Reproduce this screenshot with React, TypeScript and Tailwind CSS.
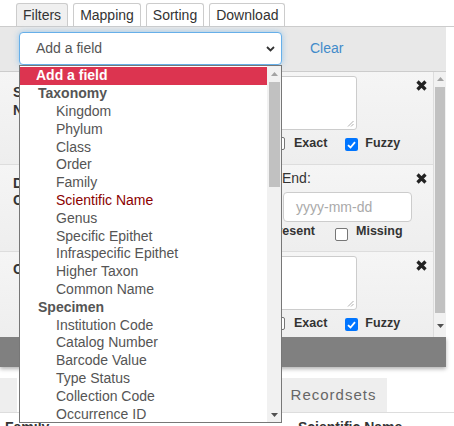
import React from 'react';

const Checkbox = ({ checked = false }: { checked?: boolean }) =>
  checked ? (
    <span className="flex h-[13px] w-[13px] shrink-0 items-center justify-center rounded-[2px] bg-[#0075ff]">
      <svg width="9" height="8" viewBox="0 0 9 8">
        <path d="M1 4.2 L3.5 6.5 L8 1.2" fill="none" stroke="white" strokeWidth="1.8" />
      </svg>
    </span>
  ) : (
    <span className="block h-[13px] w-[13px] shrink-0 rounded-[2px] border border-[#767676] bg-white" />
  );

const CloseIcon = () => (
  <svg width="11" height="11" viewBox="0 0 11 11" className="mt-[8px] shrink-0">
    <path d="M1.5 1.5 L9.5 9.5 M9.5 1.5 L1.5 9.5" stroke="#222" strokeWidth="3.2" strokeLinecap="butt" />
  </svg>
);

const MatchRow = () => (
  <div className="mt-[5px] flex h-[17px] items-start text-[12.5px] font-bold leading-[17px]">
    <span className="mt-[2px] ml-[82px]">
      <Checkbox />
    </span>
    <span className="ml-[9px]">Exact</span>
    <span className="mt-[3px] ml-[18px]">
      <Checkbox checked />
    </span>
    <span className="ml-[7px]">Fuzzy</span>
  </div>
);

const Textarea = () => (
  <div className="relative h-[54px] w-[167px] rounded-[3px] border border-[#ccc] bg-white">
    <svg width="7" height="7" viewBox="0 0 7 7" className="absolute right-[2px] bottom-[2px]">
      <path d="M6.5 1 L1 6.5 M6.5 4 L4 6.5" stroke="#999" strokeWidth="0.8" />
    </svg>
  </div>
);

const fields: { label: string; kind: 'first' | 'group' | 'opt' | 'sel' }[] = [
  { label: 'Add a field', kind: 'first' },
  { label: 'Taxonomy', kind: 'group' },
  { label: 'Kingdom', kind: 'opt' },
  { label: 'Phylum', kind: 'opt' },
  { label: 'Class', kind: 'opt' },
  { label: 'Order', kind: 'opt' },
  { label: 'Family', kind: 'opt' },
  { label: 'Scientific Name', kind: 'sel' },
  { label: 'Genus', kind: 'opt' },
  { label: 'Specific Epithet', kind: 'opt' },
  { label: 'Infraspecific Epithet', kind: 'opt' },
  { label: 'Higher Taxon', kind: 'opt' },
  { label: 'Common Name', kind: 'opt' },
  { label: 'Specimen', kind: 'group' },
  { label: 'Institution Code', kind: 'opt' },
  { label: 'Catalog Number', kind: 'opt' },
  { label: 'Barcode Value', kind: 'opt' },
  { label: 'Type Status', kind: 'opt' },
  { label: 'Collection Code', kind: 'opt' },
  { label: 'Occurrence ID', kind: 'opt' },
  { label: 'Catalog Number', kind: 'opt' },
];

const rowClass = {
  first: 'bg-[#dc3450] pl-[16px] font-bold text-white',
  group: 'pl-[18px] font-bold text-[#555]',
  opt: 'pl-[36px] text-[#555]',
  sel: 'pl-[36px] text-[#8b0000]',
};

const tabs = ['Filters', 'Mapping', 'Sorting', 'Download'];

export default function App() {
  return (
    <div className="relative h-[426px] w-[454px] overflow-hidden bg-white font-['Liberation_Sans',Arial,sans-serif] text-[14px] text-[#333]">
      <div className="w-[446px]">
        {/* Tabs */}
        <div className="flex h-[27px] w-[454px] gap-[5px] border-b border-[#ccc] pt-[3px] pl-[16px]">
          {tabs.map((t, i) => (
            <div
              key={t}
              className={`flex h-full items-center rounded-t-[3px] border border-b-0 border-[#ccc] px-[6px] leading-[17px] ${
                i === 0 ? 'bg-[#f0f0f0]' : 'bg-white'
              }`}
            >
              {t}
            </div>
          ))}
        </div>

        {/* Field picker */}
        <div className="flex h-[45px] items-start border-b border-[#ccc] bg-[#e8e8e8] pt-[5px] pl-[19px]">
          <div className="flex h-[33px] w-[263px] items-center justify-between rounded-[4px] border border-[#66afe9] bg-white pr-[6px] pl-[16px] text-[#555] shadow-[0_0_6px_rgba(102,175,233,0.6)]">
            <span>Add a field</span>
            <svg width="9" height="6" viewBox="0 0 9 6">
              <path d="M1 1 L4.5 4.5 L8 1" fill="none" stroke="#333" strokeWidth="1.8" />
            </svg>
          </div>
          <div className="flex h-[33px] items-center pl-[28px] text-[#428bca]">Clear</div>
        </div>

        {/* Filter list */}
        <div className="flex h-[265px]">
          <div className="flex w-[433px] flex-col">
            <div className="flex h-[93px] border-b border-[#ddd] bg-linear-to-b from-[#f5f5f5] to-[#eeeeee]">
              <div className="w-[190px] pt-[11px] pl-[13px] font-bold leading-[18px]">
                <div>Scientific</div>
                <div>Name</div>
              </div>
              <div className="w-[226px] pt-[4px]">
                <Textarea />
                <MatchRow />
              </div>
              <CloseIcon />
            </div>

            <div className="flex h-[87px] border-b border-[#ddd] bg-linear-to-b from-[#f5f5f5] to-[#eeeeee]">
              <div className="w-[190px] pt-[10px] pl-[13px] font-bold leading-[17px]">
                <div>Date</div>
                <div>Collected</div>
              </div>
              <div className="w-[226px] pt-[5px]">
                <div className="flex">
                  <div className="w-[92px]">
                    <div className="leading-[17px]">Start:</div>
                  </div>
                  <div>
                    <div className="leading-[17px]">End:</div>
                    <div className="mt-[5px] ml-px flex h-[30px] w-[129px] items-center rounded-[4px] border border-[#ccc] bg-white pl-[12px] text-[#aaa]">
                      yyyy-mm-dd
                    </div>
                  </div>
                </div>
                <div className="mt-[1px] flex h-[17px] items-start text-[12.5px] font-bold leading-[17px]">
                  <span className="mt-[3px] ml-[33px]">
                    <Checkbox />
                  </span>
                  <span className="ml-[9px] w-[70px] text-right">Present</span>
                  <span className="mt-[5px] ml-[20px]">
                    <Checkbox />
                  </span>
                  <span className="ml-[8px]">Missing</span>
                </div>
              </div>
              <CloseIcon />
            </div>

            <div className="flex flex-1 bg-linear-to-b from-[#f5f5f5] to-[#eeeeee]">
              <div className="w-[190px] pt-[9px] pl-[13px] font-bold leading-[17px]">Common Name</div>
              <div className="w-[226px] pt-[4px]">
                <Textarea />
                <MatchRow />
              </div>
              <CloseIcon />
            </div>
          </div>

          {/* Scrollbar */}
          <div className="flex w-[13px] flex-col items-center border-l border-[#ddd] bg-[#f1f1f1] pt-[4px]">
            <svg width="7" height="4" viewBox="0 0 7 4" className="mt-[1px]">
              <path d="M0 4 L3.5 0 L7 4 Z" fill="#a3a3a3" />
            </svg>
            <div className="mt-[6px] h-[226px] w-[10px] bg-[#c1c1c1]" />
            <svg width="7" height="4" viewBox="0 0 7 4" className="mt-[11px]">
              <path d="M0 0 L3.5 4 L7 0 Z" fill="#505050" />
            </svg>
          </div>
        </div>

        {/* Bottom bar */}
        <div className="h-[30px] bg-[#808080] shadow-[0_2px_4px_rgba(0,0,0,0.3)]" />
      </div>

      {/* Lower tabs */}
      <div className="mt-[11px] flex h-[35px] w-[454px] border-b border-[#ddd]">
        <div className="h-full w-[17px] bg-[#eeeeee]" />
        <div className="ml-[263px] flex h-full w-[107px] items-center justify-center bg-[#eeeeee] text-[15px] tracking-[1px] text-[#666]">
          Recordsets
        </div>
      </div>
      <div className="flex pt-[6px] font-bold leading-[17px]">
        <div className="w-[298px] pl-[5px]">Family</div>
        <div>Scientific Name</div>
      </div>

      {/* Open select dropdown */}
      <div className="absolute top-[65px] left-[19px] flex h-[358px] w-[263px] overflow-hidden border border-[#777] bg-white">
        <div className="w-[247px] pt-px">
          {fields.map((f, i) => (
            <div key={i} className={`flex h-[17.8px] items-center whitespace-nowrap ${rowClass[f.kind]}`}>
              {f.label}
            </div>
          ))}
        </div>
        <div className="flex w-[14px] flex-col items-center bg-[#f1f1f1] pt-[6px]">
          <svg width="7" height="4" viewBox="0 0 7 4">
            <path d="M0 4 L3.5 0 L7 4 Z" fill="#a3a3a3" />
          </svg>
          <div className="mt-[6px] h-[105px] w-[11px] bg-[#c1c1c1]" />
          <div className="flex-1" />
          <svg width="7" height="4" viewBox="0 0 7 4" className="mb-[5px]">
            <path d="M0 0 L3.5 4 L7 0 Z" fill="#505050" />
          </svg>
        </div>
      </div>
    </div>
  );
}
